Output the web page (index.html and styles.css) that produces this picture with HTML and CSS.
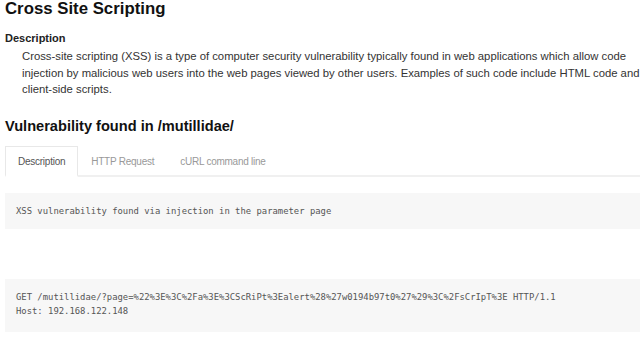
FILE: index.html
```html
<!DOCTYPE html>
<html lang="en">
<head>
    <meta charset="UTF-8">
    <meta name="viewport" content="width=device-width, initial-scale=1.0">
    <title>Cross Site Scripting</title>
    <link rel="stylesheet" href="styles.css">
</head>
<body>
    <div class="report">
        <h1>Cross Site Scripting</h1>

        <div class="section">
            <h3>Description</h3>
            <p class="desc">Cross-site scripting (XSS) is a type of computer security vulnerability typically found in web applications which allow code injection by malicious web users into the web pages viewed by other users. Examples of such code include HTML code and client-side scripts.</p>
        </div>

        <h2>Vulnerability found in /mutillidae/</h2>

        <ul class="tabs">
            <li class="tab active">Description</li>
            <li class="tab">HTTP Request</li>
            <li class="tab">cURL command line</li>
        </ul>

        <pre class="code first">XSS vulnerability found via injection in the parameter page</pre>

        <pre class="code second">GET /mutillidae/?page=%22%3E%3C%2Fa%3E%3CScRiPt%3Ealert%28%27w0194b97t0%27%29%3C%2FsCrIpT%3E HTTP/1.1
Host: 192.168.122.148</pre>
    </div>
</body>
</html>
```
FILE: styles.css
```css
body {
    font-family: "Liberation Sans", Arial, sans-serif;
    margin: 0;
    padding: 0;
    background-color: #fff;
    color: #333;
}
.report {
    padding: 0 0 0 5px;
}
h1 {
    font-size: 16.8px;
    font-weight: bold;
    color: #111;
    margin: 0;
    line-height: 18px;
}
.section {
    margin-top: 12px;
}
h3 {
    font-size: 11px;
    color: #222;
    margin: 0;
    line-height: 16px;
}
.desc {
    font-size: 11.3px;
    line-height: 16.5px;
    margin: 2px 0 0 17px;
    color: #333;
}
h2 {
    font-size: 14.6px;
    color: #111;
    margin: 18px 0 0 0;
    line-height: 20px;
}
.tabs {
    list-style: none;
    display: flex;
    margin: 10px 0 0 0;
    padding: 0;
    border-bottom: 2px solid #f0f0f0;
}
.tab {
    font-size: 10px;
    letter-spacing: -0.25px;
    color: #999;
    padding: 8px 12px 7px 12px;
    margin-bottom: -2px;
    border: 1px solid transparent;
    border-bottom: none;
    line-height: 13px;
}
.tab.active {
    color: #555;
    background: #fff;
    border-color: #e8e8e8;
    border-bottom: 2px solid #fff;
}
.code {
    font-family: "DejaVu Sans Mono", monospace;
    font-size: 8.9px;
    line-height: 14px;
    color: #555;
    background-color: #f7f7f7;
    margin: 0;
    padding: 11px;
}
.first {
    margin-top: 16px;
}
.second {
    margin-top: 50px;
    padding-bottom: 14px;
}
```
